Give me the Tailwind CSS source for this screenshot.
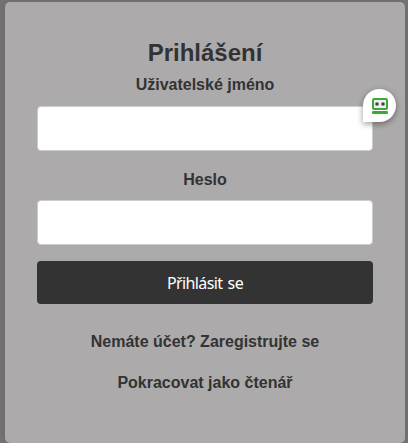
<!DOCTYPE html>
<html lang="cs">
<head>
<meta charset="utf-8">
<title>Prihlášení</title>
<script src="https://cdn.jsdelivr.net/npm/@tailwindcss/browser@4"></script>
</head>
<body class="h-[443px] overflow-hidden bg-[#757473] pl-[5px] pt-[2px] font-['Liberation_Sans',Arial,sans-serif] text-[#333333]">
<main class="flex h-[441px] w-[400px] flex-col rounded-[5px] bg-[#acaaab] px-8 pt-9 text-center font-bold shadow-[0_0_10px_rgba(0,0,0,0.1)]">
  <h1 class="h-9 text-2xl leading-[30px]">Prihlášení</h1>
  <form class="flex flex-col">
    <label for="user" class="h-8 text-base leading-[22px]">Uživatelské jméno</label>
    <div class="relative">
      <input id="user" class="block h-[45px] w-full rounded-[4px] border border-[#cccccc] bg-white px-3">
      <span class="absolute -right-[23px] -top-[17px] flex size-[33px] items-center justify-center rounded-full rounded-bl-none bg-white shadow-[0_2px_6px_rgba(0,0,0,0.4)]">
        <svg class="h-4 w-4" viewBox="0 0 16 16" fill="none">
          <rect x="1" y="1" width="14" height="10" rx="1" fill="#eeeeee" stroke="#3aaa35" stroke-width="2"/>
          <circle cx="5" cy="6" r="1.8" fill="#444"/>
          <circle cx="11" cy="6" r="1.8" fill="#444"/>
          <rect x="0" y="13" width="16" height="3" rx="1" fill="#3aaa35"/>
        </svg>
      </span>
    </div>
    <label for="pass" class="h-[49px] pt-[18px] text-base leading-[22px]">Heslo</label>
    <input id="pass" type="password" class="block h-[45px] w-full rounded-[4px] border border-[#cccccc] bg-white px-3">
    <button type="button" class="mt-4 h-[43px] rounded-[4px] bg-[#333333] font-['Noto_Sans',Tahoma,sans-serif] text-base font-normal tracking-[-0.6px] [word-spacing:1.5px] text-white">Přihlásit se</button>
  </form>
  <a class="mt-[27px] text-base leading-[22px]">Nemáte účet? Zaregistrujte se</a>
  <a class="mt-[19px] text-base leading-[22px]">Pokracovat jako čtenář</a>
</main>
</body>
</html>
